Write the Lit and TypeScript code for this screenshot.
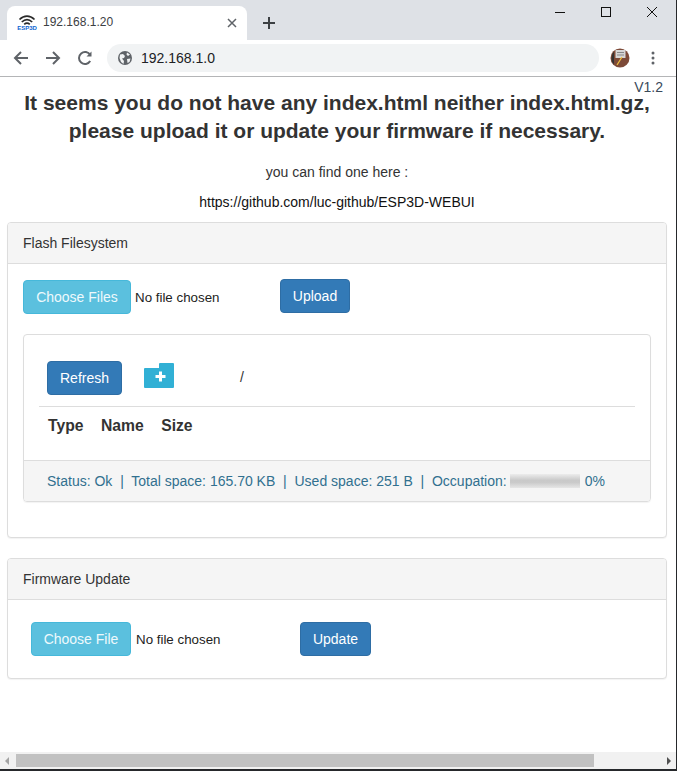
import { LitElement, html, css } from "lit";
import { customElement } from "lit/decorators.js";

@customElement("app-root")
export class AppRoot extends LitElement {
  static styles = css`
    :host { display: block; width: 677px; height: 771px; overflow: hidden; background: #26282b; font-family: "Liberation Sans", Arial, sans-serif; color: #333; font-size: 14px; }
    * { box-sizing: border-box; }
    .window { width: 676px; height: 769px; background: #fff; display: flex; flex-direction: column; position: relative; }
    .tabstrip { height: 40px; background: #dee1e6; display: flex; align-items: flex-end; padding-left: 7px; flex: none; }
    .tab { width: 240px; height: 34px; background: #fff; border-radius: 8px 8px 0 0; display: flex; align-items: center; padding: 0 10px 0 11px; font-size: 12px; color: #3c4043; }
    .fav { width: 18px; height: 20px; display: flex; flex-direction: column; align-items: center; margin-right: 7px; flex: none; }
    .fav svg { display: block; }
    .fav span { font-size: 6px; line-height: 6px; font-weight: 700; color: #0a62d0; letter-spacing: 0; margin-top: -1px; }
    .tabtitle { flex: 1; position: relative; top: -1px; }
    .plus { margin-left: 16px; margin-bottom: 11px; display: block; }
    .spacer { flex: 1; }
    .winctl { align-self: flex-start; display: flex; height: 24px; align-items: center; padding-right: 1px; }
    .winctl svg { display: block; }
    .wc { width: 46px; display: flex; justify-content: center; }
    .toolbar { height: 37px; flex: none; border-bottom: 1px solid #b4b5b7; display: flex; align-items: center; padding: 0 0 1px 13px; background: #fff; }
    .nav { display: block; margin-right: 16px; }
    .nav.reload { margin-right: 14px; }
    .omni { width: 492px; height: 28px; background: #f1f3f4; border-radius: 14px; display: flex; align-items: center; padding-left: 11px; font-size: 14px; color: #202124; gap: 9px; }
    .avatar { margin-left: 11px; display: block; }
    .kebab { margin-left: 21px; display: block; }
    .content { flex: 1; position: relative; min-height: 0; padding: 0 9px 0 7px; }
    .version { position: absolute; right: 13px; top: 3px; font-size: 14px; line-height: 14px; color: #3a4a5a; }
    h4 { margin: 0; padding-top: 12px; font-size: 21px; line-height: 28px; font-weight: 700; text-align: center; color: #333; white-space: nowrap; }
    .note { text-align: center; line-height: 20px; margin-top: 17px; }
    .note + .note { margin-top: 10px; color: #111; }
    .panel { border: 1px solid #ddd; border-radius: 4px; box-shadow: 0 1px 1px rgba(0,0,0,.05); background: #fff; }
    .panel.first { margin-top: 10px; height: 316px; }
    .panel.second { margin-top: 20px; height: 121px; }
    .ph { height: 41px; background: #f5f5f5; border-bottom: 1px solid #ddd; padding: 0 15px; display: flex; align-items: center; border-radius: 3px 3px 0 0; font-size: 14px; color: #333; }
    .row { display: flex; align-items: center; }
    .row.one { padding: 15px 0 0 15px; }
    .row.two { padding: 22px 0 0 23px; }
    .btn { border-radius: 4px; border: 1px solid #2e6da4; background: #337ab7; color: #fff; font-size: 14px; height: 34px; display: flex; align-items: center; justify-content: center; font-family: inherit; padding: 0; }
    .choose { background: #5bc0de; border-color: #46b8da; color: #eef9fc; }
    .row.one .choose { position: relative; top: 1px; }
    .w108 { width: 108px; } .w100 { width: 100px; } .w70 { width: 70px; } .w71 { width: 71px; } .w75 { width: 75px; }
    .fname { font-size: 13.33px; color: #222; position: relative; top: 1px; }
    .fname.a { margin-left: 4px; width: 145px; }
    .fname.b { margin-left: 5px; width: 164px; top: 0; }
    .inner { margin: 21px 15px 0 15px; height: 168px; border: 1px solid #ddd; border-radius: 4px; box-shadow: 0 1px 1px rgba(0,0,0,.05); display: flex; flex-direction: column; }
    .tools { display: flex; align-items: center; padding: 26px 0 0 23px; height: 60px; }
    .tools svg { display: block; margin-left: 22px; margin-bottom: 5px; }
    .slash { margin-left: 66px; position: relative; top: -1px; font-size: 14px; }
    .rule { margin: 11px 15px 0; border-top: 1px solid #ddd; }
    .cols { display: flex; padding: 9px 0 0 24px; font-weight: 700; font-size: 15.7px; line-height: 20px; gap: 17.5px; flex: 1; }
    .status { height: 41px; background: #f5f5f5; border-top: 1px solid #ddd; display: flex; align-items: center; padding-left: 23px; color: #31708f; font-size: 14px; white-space: pre; border-radius: 0 0 3px 3px; }
    .bar { width: 70px; height: 14px; margin: 0 5px 0 3px; background: linear-gradient(#ececec, #c9c9c9 45%, #cacaca 60%, #e6e6e6); }
    .hscroll { height: 17px; flex: none; background: #f1f1f1; display: flex; align-items: center; justify-content: space-between; padding: 0 5px; position: relative; }
    .thumb { position: absolute; left: 16px; width: 578px; top: 2px; height: 13px; background: #c1c1c1; }
    .hscroll svg { display: block; }
  `;

  render() {
    return html`<div class="window">
      <div class="tabstrip">
        <div class="tab">
          <div class="fav">
            <svg width="18" height="13" viewBox="0 0 18 13" fill="none" stroke="#2a2a2a" stroke-width="1.7">
              <path d="M1.5 6.5 C6 2 12 2 16.5 6.5"/><path d="M3.8 9 C7 6 11 6 14.2 9"/><path d="M6.2 11.4 C8 9.8 10 9.8 11.8 11.4"/>
            </svg>
            <span>ESP3D</span>
          </div>
          <span class="tabtitle">192.168.1.20</span>
          <svg width="10" height="10" viewBox="0 0 10 10" stroke="#5f6368" stroke-width="1.5"><path d="M1 1 L9 9 M9 1 L1 9"/></svg>
        </div>
        <svg class="plus" width="12" height="12" viewBox="0 0 12 12" stroke="#3c4043" stroke-width="2"><path d="M6 0 V12 M0 6 H12"/></svg>
        <div class="spacer"></div>
        <div class="winctl">
          <div class="wc"><svg width="10" height="10" viewBox="0 0 10 10" stroke="#111" stroke-width="1"><path d="M0 5.5 H10"/></svg></div>
          <div class="wc"><svg width="10" height="10" viewBox="0 0 10 10" fill="none" stroke="#111" stroke-width="1"><rect x=".5" y=".5" width="9" height="9"/></svg></div>
          <div class="wc"><svg width="10" height="10" viewBox="0 0 10 10" stroke="#111" stroke-width="1"><path d="M0 0 L10 10 M10 0 L0 10"/></svg></div>
        </div>
      </div>
      <div class="toolbar">
        <svg class="nav" width="16" height="16" viewBox="0 0 16 16" fill="none" stroke="#5f6368" stroke-width="2"><path d="M15 8 H2 M8 2 L2 8 L8 14"/></svg>
        <svg class="nav" width="16" height="16" viewBox="0 0 16 16" fill="none" stroke="#5f6368" stroke-width="2"><path d="M1 8 H14 M8 2 L14 8 L8 14"/></svg>
        <svg class="nav reload" width="16" height="16" viewBox="0 0 16 16" fill="none" stroke="#5f6368" stroke-width="2"><path d="M13.2 11 A6 6 0 1 1 13.2 5"/><path d="M14.5 1.5 V6.5 H9.5" fill="#5f6368" stroke="none"/></svg>
        <div class="omni">
          <svg width="14" height="14" viewBox="0 0 14 14"><circle cx="7" cy="7" r="7" fill="#5f6368"/><path d="M2 3.5 L5 3 L7 5 L6 7 L4 7.5 L6 10 L5.5 13 L3 11 L1.5 7 Z M9 1.5 L12 3.5 L10 5 L8.5 3.5 Z M9 8 L12.5 7.5 L11.5 11 L9.5 12 Z" fill="#f1f3f4"/></svg>
          <span>192.168.1.0</span>
        </div>
        <svg class="avatar" width="20" height="20" viewBox="0 0 20 20">
          <circle cx="10" cy="10" r="9.5" fill="#7d4a38"/><path d="M1.5 10 A9 9 0 0 1 4 3.5 V16.5 A9 9 0 0 1 1.5 10 Z" fill="#333"/>
          <rect x="5.5" y="2" width="10" height="8" fill="#d6d6d6"/><path d="M7 4.5 H14 M7 7 H14" stroke="#888"/><path d="M7 17 L12 9" stroke="#f0c040" stroke-width="1.2"/>
        </svg>
        <svg class="kebab" width="4" height="14" viewBox="0 0 4 14" fill="#5f6368"><circle cx="2" cy="2" r="1.5"/><circle cx="2" cy="7" r="1.5"/><circle cx="2" cy="12" r="1.5"/></svg>
      </div>
      <div class="content">
        <div class="version">V1.2</div>
        <h4>It seems you do not have any index.html neither index.html.gz,<br />please upload it or update your firmware if necessary.</h4>
        <div class="note">you can find one here :</div>
        <div class="note">https://github.com/luc-github/ESP3D-WEBUI</div>
        <div class="panel first">
          <div class="ph">Flash Filesystem</div>
          <div class="row one">
            <button class="btn choose w108">Choose Files</button>
            <span class="fname a">No file chosen</span>
            <button class="btn w70">Upload</button>
          </div>
          <div class="inner">
            <div class="tools">
              <button class="btn w75">Refresh</button>
              <svg width="30" height="25" viewBox="0 0 30 25"><path d="M0 6 a1 1 0 0 1 1-1 H15 V1 a1 1 0 0 1 1-1 H29 a1 1 0 0 1 1 1 V24 a1 1 0 0 1-1 1 H1 a1 1 0 0 1-1-1 Z" fill="#31b0d5"/><path d="M16.5 8.5 V18.5 M11.5 13.5 H21.5" stroke="#fff" stroke-width="3"/></svg>
              <span class="slash">/</span>
            </div>
            <div class="rule"></div>
            <div class="cols"><span>Type</span><span>Name</span><span>Size</span></div>
            <div class="status">Status: Ok  |  Total space: 165.70 KB  |  Used space: 251 B  |  Occupation:<div class="bar"></div>0%</div>
          </div>
        </div>
        <div class="panel second">
          <div class="ph">Firmware Update</div>
          <div class="row two">
            <button class="btn choose w100">Choose File</button>
            <span class="fname b">No file chosen</span>
            <button class="btn w71">Update</button>
          </div>
        </div>
      </div>
      <div class="hscroll">
        <svg width="4" height="8" viewBox="0 0 4 8" fill="#a3a3a3"><path d="M4 0 V8 L0 4 Z"/></svg>
        <div class="thumb"></div>
        <svg width="4" height="8" viewBox="0 0 4 8" fill="#505050"><path d="M0 0 V8 L4 4 Z"/></svg>
      </div>
    </div>`;
  }
}
